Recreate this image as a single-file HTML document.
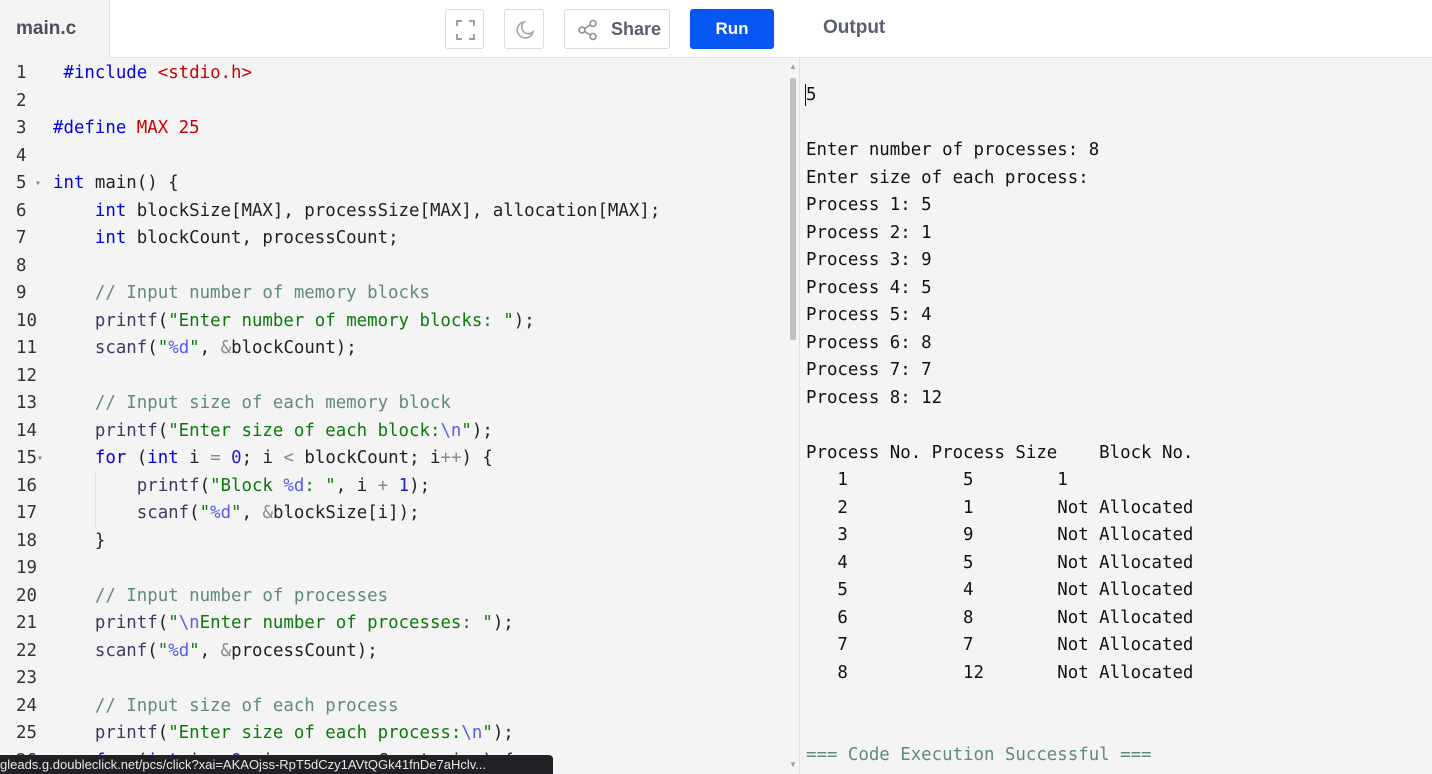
<!DOCTYPE html>
<html style="overflow:hidden;width:1432px;height:774px"><head><meta charset="utf-8"><style>
*{margin:0;padding:0;box-sizing:border-box}
body{width:1432px;height:774px;overflow:hidden;background:#f4f4f4;font-family:"Liberation Sans",sans-serif;position:relative}
.hdr{position:absolute;left:0;top:0;width:1432px;height:58px;background:#fff;border-bottom:1px solid #dde3ea}
.tab{position:absolute;left:0;top:0;width:110px;height:58px;background:#f4f4f4;border-right:1px solid #dde3ea;color:#4a4f5e;font-size:19px;font-weight:bold;padding:18px 0 0 16px}
.btn{position:absolute;top:9px;height:40px;border:1px solid #d8dbe0;border-radius:3px;background:#fff}
.run{position:absolute;left:690px;top:9px;width:84px;height:40px;background:#0556f3;border-radius:3px;color:#fff;font-weight:bold;font-size:17px;text-align:center;line-height:40px}
.out{position:absolute;left:823px;top:17px;font-size:19px;font-weight:bold;color:#5a5f6e}
.vdiv{position:absolute;left:799px;top:0;width:1px;height:774px;background:#dde3ea}
.code{position:absolute;top:60px;left:0;width:786px;height:714px;overflow:hidden;font-family:"DejaVu Sans Mono",monospace;font-size:17.4px;line-height:27.5px}
.ln{position:absolute;left:0;top:0;width:50px}
.ln div{position:relative;padding-left:16px;color:#333;height:27.5px;overflow:visible}
.ln i{position:absolute;left:35px;top:0;font-style:normal;font-size:10px;color:#888}
.src{position:absolute;left:53px;top:0;white-space:pre;color:#222}
.k{color:#0000e6}.s{color:#0a7a0a}.c{color:#5f8a80}.n{color:#c00}.f{color:#3b3b66}.e{color:#5a5af0}.o{color:#888}.d{color:#2020cc}
.otxt{position:absolute;left:806px;top:82px;white-space:pre;font-family:"DejaVu Sans Mono",monospace;font-size:17.4px;line-height:27.5px;color:#111}
.thumb{position:absolute;left:790px;top:78px;width:6px;height:262px;background:#c1c1c1;border-radius:2px}
.status{position:absolute;left:0;top:755px;width:553px;height:19px;background:#202124;color:#e8e8e8;font-size:13px;line-height:19px;border-top-right-radius:4px;white-space:nowrap;overflow:hidden}
</style></head><body>
<div class="code">
<div class="ln"><div>1</div><div>2</div><div>3</div><div>4</div><div>5<i>▾</i></div><div>6</div><div>7</div><div>8</div><div>9</div><div>10</div><div>11</div><div>12</div><div>13</div><div>14</div><div>15<i style="left:37px">▾</i></div><div>16</div><div>17</div><div>18</div><div>19</div><div>20</div><div>21</div><div>22</div><div>23</div><div>24</div><div>25</div><div>26</div></div>
<div class="src"> <span class="k">#include</span> <span class="n">&lt;stdio.h&gt;</span>

<span class="k">#define</span> <span class="n">MAX 25</span>

<span class="k">int</span> main() {
    <span class="k">int</span> blockSize[MAX], processSize[MAX], allocation[MAX];
    <span class="k">int</span> blockCount, processCount;

    <span class="c">// Input number of memory blocks</span>
    <span class="f">printf</span>(<span class="s">"Enter number of memory blocks: "</span>);
    <span class="f">scanf</span>(<span class="s">"<span class="e">%d</span>"</span>, <span class="o">&amp;</span>blockCount);

    <span class="c">// Input size of each memory block</span>
    <span class="f">printf</span>(<span class="s">"Enter size of each block:<span class="e">\n</span>"</span>);
    <span class="k">for</span> (<span class="k">int</span> i <span class="o">=</span> <span class="d">0</span>; i <span class="o">&lt;</span> blockCount; i<span class="o">++</span>) {
        <span class="f">printf</span>(<span class="s">"Block <span class="e">%d</span>: "</span>, i <span class="o">+</span> <span class="d">1</span>);
        <span class="f">scanf</span>(<span class="s">"<span class="e">%d</span>"</span>, <span class="o">&amp;</span>blockSize[i]);
    }

    <span class="c">// Input number of processes</span>
    <span class="f">printf</span>(<span class="s">"<span class="e">\n</span>Enter number of processes: "</span>);
    <span class="f">scanf</span>(<span class="s">"<span class="e">%d</span>"</span>, <span class="o">&amp;</span>processCount);

    <span class="c">// Input size of each process</span>
    <span class="f">printf</span>(<span class="s">"Enter size of each process:<span class="e">\n</span>"</span>);
    <span class="k">for</span> (<span class="k">int</span> i <span class="o">=</span> <span class="d">0</span>; i <span class="o">&lt;</span> processCount; i<span class="o">++</span>) {</div>
</div>
<div style="position:absolute;left:95px;top:472px;width:1px;height:55px;background:#e0e0e0"></div>
<div class="thumb"></div>
<div style="position:absolute;left:789px;top:62px;font-size:8px;color:#a0a0a0">▲</div>
<div style="position:absolute;left:789px;top:760px;font-size:8px;color:#a0a0a0">▼</div>
<div style="position:absolute;left:805px;top:84px;width:1px;height:22px;background:#111"></div>
<div class="otxt">5

Enter number of processes: 8
Enter size of each process:
Process 1: 5
Process 2: 1
Process 3: 9
Process 4: 5
Process 5: 4
Process 6: 8
Process 7: 7
Process 8: 12

Process No. Process Size    Block No.
   1           5        1
   2           1        Not Allocated
   3           9        Not Allocated
   4           5        Not Allocated
   5           4        Not Allocated
   6           8        Not Allocated
   7           7        Not Allocated
   8           12       Not Allocated


<span style="color:#5f8a80">=== Code Execution Successful ===</span></div>
<div class="vdiv"></div>
<div class="hdr">
<div class="tab">main.c</div>
<div class="btn" style="left:445px;width:39px"><svg width="39" height="40" viewBox="0 0 39 40" fill="none" stroke="#9aa0aa" stroke-width="2"><path d="M11 16v-5h5M23 11h5v5M28 24v5h-5M16 29h-5v-5"/></svg></div>
<div class="btn" style="left:504px;width:40px"><svg width="40" height="40" viewBox="0 0 40 40" fill="none" stroke="#a0a5ae" stroke-width="1.6"><path d="M19 12a8 8 0 1 0 9 10a6.5 6.5 0 0 1-9-10z"/></svg></div>
<div class="btn" style="left:564px;width:106px"><svg style="position:absolute;left:12px;top:9px" width="22" height="22" viewBox="0 0 22 22" fill="none" stroke="#8a909a" stroke-width="1.6"><circle cx="5" cy="11" r="3"/><circle cx="16" cy="4.5" r="3"/><circle cx="16" cy="17.5" r="3"/><path d="M7.6 9.5l5.8-3.5M7.6 12.5l5.8 3.5"/></svg><span style="position:absolute;left:46px;top:9px;font-size:18px;font-weight:bold;color:#5a5f6e">Share</span></div>
<div class="run">Run</div>
<div class="out">Output</div>
</div>
<div class="status">gleads.g.doubleclick.net/pcs/click?xai=AKAOjss-RpT5dCzy1AVtQGk41fnDe7aHclv...</div>
</body></html>
